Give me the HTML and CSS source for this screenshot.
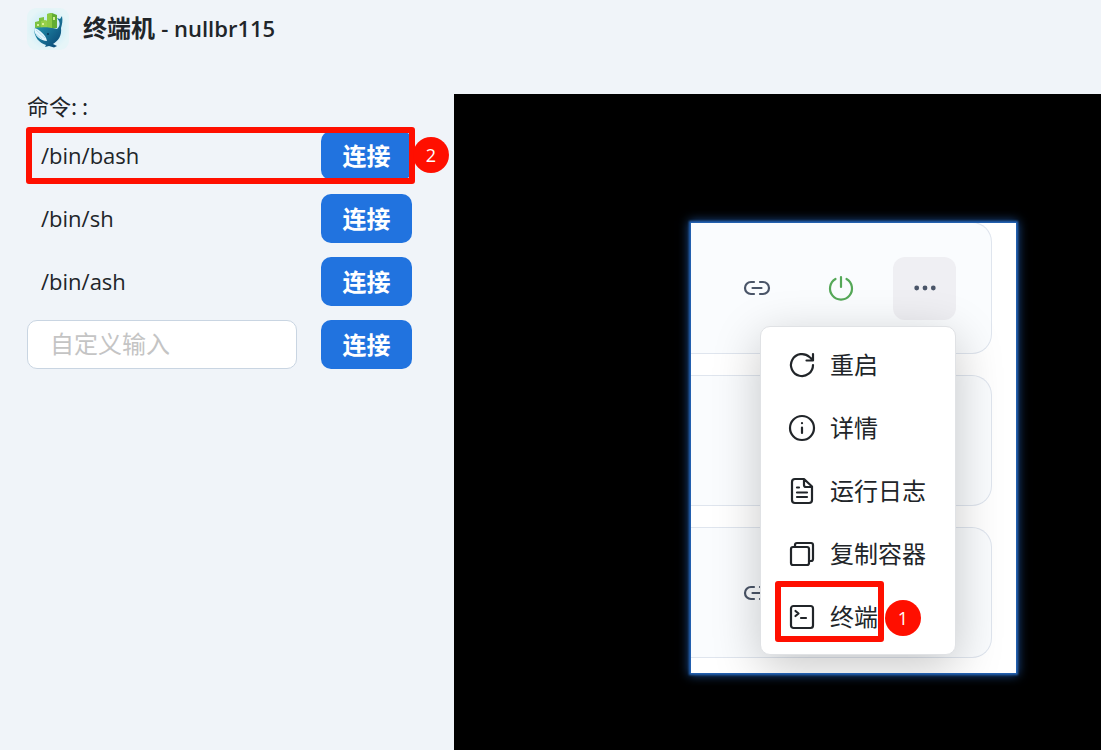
FILE: index.html
```html
<!DOCTYPE html>
<html lang="zh-CN">
<head>
    <meta charset="UTF-8">
    <meta name="viewport" content="width=device-width, initial-scale=1.0">
    <title>终端机 - nullbr115</title>
    <link rel="stylesheet" href="styles.css">
</head>
<body>
    <!-- shared icons -->
    <svg class="sprite" aria-hidden="true">
        <symbol id="icon-link" viewBox="0 0 28 28">
            <path d="M11 8H8a6 6 0 0 0 0 12h3M17 8h3a6 6 0 0 1 0 12h-3M9.500 14h9"/>
        </symbol>
    </svg>

    <header class="header">
        <svg class="logo" viewBox="0 0 42 42" aria-hidden="true">
            <defs>
                <radialGradient id="logo-bg">
                    <stop offset="0" stop-color="#b5e6fa"/>
                    <stop offset="0.6" stop-color="#d3f0f8"/>
                    <stop offset="1" stop-color="#e6f5f8"/>
                </radialGradient>
                <linearGradient id="whale" x1="0" y1="0" x2="1" y2="1">
                    <stop offset="0" stop-color="#2ba6bd"/>
                    <stop offset="1" stop-color="#06406f"/>
                </linearGradient>
            </defs>
            <rect width="42" height="42" rx="9" fill="url(#logo-bg)"/>
            <path d="M8 20v-6l4-1v-3l5-1v5l3-1v8z" fill="#7cc242"/>
            <path d="M14 21v-8l4-1 3 1v8z" fill="#96d04a"/>
            <path d="M20 21V6l5-1 5 2v13z" fill="#62ad32"/>
            <path d="M20 6l5-1v15h-5z" fill="#8bcb45"/>
            <path d="M10 16h2v2h-2zM15 15h2v2h-2zM26 9h2v3h-2z" fill="#d6ef9a"/>
            <path d="M7 20c8-1 15-1 23 1 3-3 3-5 2-8l-2-3 3 1 2-3c1 5 0 8-1 12 1 8-3 13-8 16l4 2-3 1.500-5-1.500-4 1 1-2c-7-2-12-8-12-17z" fill="url(#whale)"/>
            <path d="M7 20c5 1 12 7 13 13-6 0-13-5-13-13z" fill="#e3f5fd"/>
            <path d="M9 22l9 8M8 25l7 6" stroke="#9fd1e6" stroke-width=".7"/>
            <circle cx="21" cy="26" r="1" fill="#053253"/>
        </svg>
        <h1 class="title">终端机 <span class="name">- nullbr115</span></h1>
    </header>

    <main class="main">
        <form class="sidebar">
            <h2 class="label">命令: :</h2>
            <div class="row">
                <span class="command">/bin/bash</span>
                <button type="button" class="connect">连接</button>
                <span class="mark mark-row"></span>
                <span class="badge badge-row">2</span>
            </div>
            <div class="row">
                <span class="command">/bin/sh</span>
                <button type="button" class="connect">连接</button>
            </div>
            <div class="row">
                <span class="command">/bin/ash</span>
                <button type="button" class="connect">连接</button>
            </div>
            <div class="row">
                <input class="custom" type="text" placeholder="自定义输入" aria-label="自定义输入">
                <button type="button" class="connect">连接</button>
            </div>
        </form>

        <section class="terminal">
            <div class="panel">
                <div class="card">
                    <button type="button" class="tool" aria-label="链接">
                        <svg class="icon"><use href="#icon-link"/></svg>
                    </button>
                    <button type="button" class="tool tool-power" aria-label="电源">
                        <svg class="icon" viewBox="0 0 28 28">
                            <path d="M14 3v10M8.500 5a11 11 0 1 0 11 0"/>
                        </svg>
                    </button>
                    <button type="button" class="tool tool-active" aria-label="更多">
                        <svg class="icon" viewBox="0 0 28 28">
                            <g fill="currentColor" stroke="none">
                                <circle cx="5.7" cy="14" r="2.4"/>
                                <circle cx="14" cy="14" r="2.4"/>
                                <circle cx="22.3" cy="14" r="2.4"/>
                            </g>
                        </svg>
                    </button>
                </div>
                <div class="card"></div>
                <div class="card">
                    <button type="button" class="tool" aria-label="链接">
                        <svg class="icon"><use href="#icon-link"/></svg>
                    </button>
                    <span class="tool"></span>
                    <span class="tool"></span>
                </div>

                <div class="menu">
                    <button type="button" class="item">
                        <svg class="icon" viewBox="0 0 28 28">
                            <path d="M25 14a11 11 0 1 1-3.5-8L25 9M25 3v6.500h-6.500"/>
                        </svg>
                        <span class="text">重启</span>
                    </button>
                    <button type="button" class="item">
                        <svg class="icon" viewBox="0 0 28 28">
                            <circle cx="14" cy="14" r="12"/>
                            <path d="M14 13.500v5.500M14 9v.2"/>
                        </svg>
                        <span class="text">详情</span>
                    </button>
                    <button type="button" class="item">
                        <svg class="icon" viewBox="0 0 28 28">
                            <path d="M16 2H7a3 3 0 0 0-3 3v18a3 3 0 0 0 3 3h14a3 3 0 0 0 3-3V9.500zM16 2.500V8a2 2 0 0 0 2 2h5.500M9 10.500h2M9 15.500h10M9 20h10"/>
                        </svg>
                        <span class="text">运行日志</span>
                    </button>
                    <button type="button" class="item">
                        <svg class="icon" viewBox="0 0 28 28">
                            <rect x="3" y="7" width="18" height="18" rx="2"/>
                            <path d="M7 7V5a2 2 0 0 1 2-2h14a2 2 0 0 1 2 2v14a2 2 0 0 1-2 2h-2"/>
                        </svg>
                        <span class="text">复制容器</span>
                    </button>
                    <button type="button" class="item">
                        <svg class="icon" viewBox="0 0 28 28">
                            <rect x="3" y="3" width="22" height="22" rx="2.500"/>
                            <path d="M7.500 8l3 2.500-3 2.500M13 15h5"/>
                        </svg>
                        <span class="text">终端</span>
                        <span class="mark mark-item"></span>
                        <span class="badge badge-item">1</span>
                    </button>
                </div>
            </div>
        </section>
    </main>
</body>
</html>
```

FILE: styles.css
```css
* {
    margin: 0;
    padding: 0;
    box-sizing: border-box;
}

body {
    display: flex;
    flex-direction: column;
    min-height: 100vh;
    background: #f0f4f9;
    color: #212529;
    font-family: "Open Sans", "Noto Sans CJK SC", sans-serif;
    font-size: 22px;
}

button,
input {
    font: inherit;
    color: inherit;
}

button {
    border: none;
    background: none;
    cursor: pointer;
}

.sprite {
    position: absolute;
    width: 0;
    height: 0;
}

.header {
    display: flex;
    align-items: center;
    gap: 14px;
    height: 94px;
    padding: 8px 27px 44px;
}

.logo {
    width: 42px;
    height: 42px;
}

.title {
    padding-bottom: 2px;
    font-size: 24px;
    font-weight: 600;
    line-height: 24px;
}

.name {
    font-size: 22px;
}

.main {
    display: flex;
    flex: 1;
}

.sidebar {
    display: flex;
    flex-direction: column;
    gap: 14px;
    width: 454px;
    padding: 0 42px 0 27px;
}

.label {
    font-family: "Noto Sans CJK SC", sans-serif;
    font-size: 22px;
    font-weight: 400;
    line-height: 23px;
}

.row {
    position: relative;
    display: flex;
    align-items: center;
    gap: 24px;
}

.command {
    flex: 1;
    padding: 0 0 2px 14px;
}

.custom {
    flex: 1;
    min-width: 0;
    height: 49px;
    padding: 0 22px 2px;
    border: 1px solid #c9d5e2;
    border-radius: 10px;
    background: #fff;
    font-size: 24px;
    outline: none;
}

.custom::placeholder {
    color: #c4c4c4;
}

.connect {
    width: 91px;
    height: 49px;
    padding-bottom: 2px;
    border-radius: 10px;
    background: #2173df;
    color: #fff;
    font-size: 24px;
    font-weight: 700;
}

.terminal {
    position: relative;
    flex: 1;
    background: #000;
}

/* container list floating over the console */
.panel {
    position: absolute;
    top: 129px;
    right: 85px;
    display: flex;
    flex-direction: column;
    gap: 21px;
    width: 325px;
    height: 450px;
    overflow: hidden;
    background: #fff;
    box-shadow: 0 0 2px 2px #2463b5, 0 0 10px 2px #1d4f94;
}

.card {
    display: flex;
    align-items: center;
    justify-content: flex-end;
    gap: 21px;
    height: 131px;
    flex-shrink: 0;
    margin-right: 24px;
    padding-right: 35px;
    border: 1px solid #dfe5ee;
    border-left: none;
    border-radius: 0 20px 20px 0;
    background: #fafcfe;
}

/* the list is scrolled, so the top edge of the first card is cut */
.card:first-child {
    height: 132px;
    margin-top: -1px;
}

.tool {
    display: grid;
    place-items: center;
    width: 63px;
    height: 63px;
    border-radius: 12px;
    color: #4a5568;
}

.tool-power {
    color: #55a858;
}

.tool-active {
    background: #efeff3;
}

.icon {
    width: 28px;
    height: 28px;
    fill: none;
    stroke: currentColor;
    stroke-width: 2.2;
    stroke-linecap: round;
    stroke-linejoin: round;
}

.menu {
    position: absolute;
    top: 103px;
    left: 69px;
    width: 196px;
    padding: 6px 0;
    border: 1px solid #e0e2e5;
    border-radius: 10px;
    background: #fff;
    box-shadow: 0 12px 48px rgba(0, 0, 0, 0.22);
}

.item {
    position: relative;
    display: flex;
    align-items: center;
    gap: 14px;
    width: 100%;
    height: 63px;
    padding: 0 27px;
    font-size: 24px;
    white-space: nowrap;
}

.text {
    padding-bottom: 2px;
}

/* red step markers */
.mark {
    position: absolute;
    border: 6px solid #ff0f00;
    border-radius: 3px;
}

.mark-row {
    inset: -4px -3px -4px -1px;
}

.mark-item {
    top: -4px;
    left: 14px;
    width: 109px;
    height: 61px;
}

.badge {
    position: absolute;
    display: grid;
    place-items: center;
    width: 36px;
    height: 36px;
    border-radius: 50%;
    background: #ff0f00;
    color: #fff;
    font-size: 18px;
}

.badge-row {
    top: 6px;
    right: -37px;
}

.badge-item {
    top: 15px;
    left: 124px;
}
```
